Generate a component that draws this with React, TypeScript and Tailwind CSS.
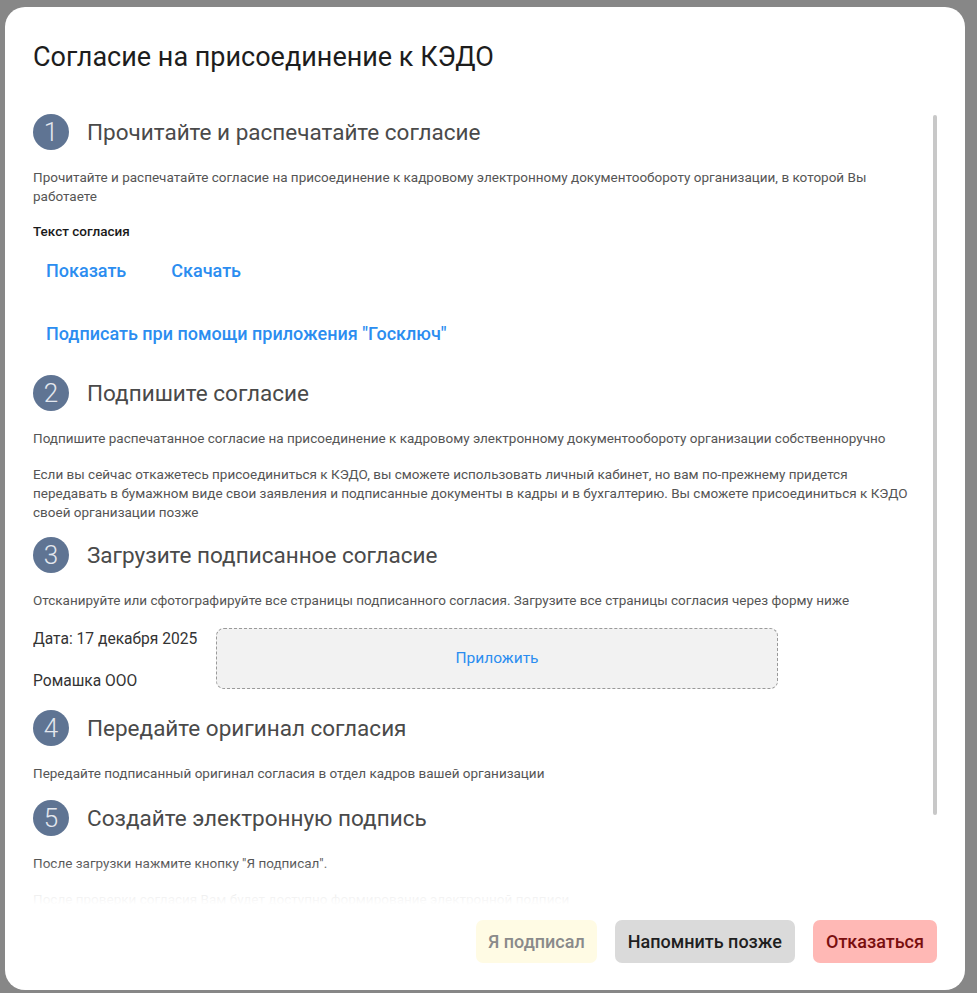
import * as React from "react";

/* Модальное окно: согласие на присоединение к КЭДО */

const STEP_HEAD = "text-[22.5px] leading-[28px] text-[#4a4a4a]";
const DESC = "text-[13.5px] leading-[19px] text-[#555]";

function StepTitle({ n, title }: { n: number; title: string }) {
  return (
    <div className="flex items-center gap-[18px]">
      <div className="flex size-[36px] shrink-0 items-center justify-center rounded-full bg-[#5f7493] text-[26px] font-light leading-none text-[#e3e7ee]">
        {n}
      </div>
      <h3 className={STEP_HEAD}>{title}</h3>
    </div>
  );
}

function LinkButton({ children }: { children: React.ReactNode }) {
  return (
    <button className="rounded-md px-[13px] py-[10px] text-[18px] font-medium leading-[20px] text-[#2b8df0]">
      {children}
    </button>
  );
}

export default function App() {
  return (
    <div className="flex h-[993px] w-full items-start justify-center bg-[#878787] pt-[7px] font-['Roboto',sans-serif]">
      <div className="ml-[-7px] flex h-[983px] w-[960px] flex-col rounded-[20px] bg-white">
        {/* header */}
        <div className="px-[28px] pt-[35px]">
          <h2 className="text-[27px] leading-[30px] text-[#1d1d1d]">
            Согласие на присоединение к КЭДО
          </h2>
        </div>

        {/* scroll body */}
        <div className="relative mt-[38px] ml-[28px] mr-[28px] h-[795px]">
          <div className="h-full overflow-hidden pr-[18px]">
            <div className="pt-[4px]">
              {/* 1 */}
              <StepTitle n={1} title="Прочитайте и распечатайте согласие" />
              <p className={`${DESC} mt-[18px]`}>
                Прочитайте и распечатайте согласие на присоединение к кадровому
                электронному документообороту организации, в которой Вы работаете
              </p>
              <p className="mt-[16px] text-[13.5px] font-medium leading-[19px] text-[#1a1a1a]">
                Текст согласия
              </p>
              <div className="mt-[10px] flex gap-[19px]">
                <LinkButton>Показать</LinkButton>
                <LinkButton>Скачать</LinkButton>
              </div>
              <div className="mt-[23px] flex">
                <LinkButton>Подписать при помощи приложения "Госключ"</LinkButton>
              </div>

              {/* 2 */}
              <div className="mt-[21px]">
                <StepTitle n={2} title="Подпишите согласие" />
              </div>
              <p className={`${DESC} mt-[18px]`}>
                Подпишите распечатанное согласие на присоединение к кадровому
                электронному документообороту организации собственноручно
              </p>
              <p className={`${DESC} mt-[17px] leading-[18.5px]`}>
                Если вы сейчас откажетесь присоединиться к КЭДО, вы сможете
                использовать личный кабинет, но вам по-прежнему придется
                передавать в бумажном виде свои заявления и подписанные документы
                в кадры и в бухгалтерию. Вы сможете присоединиться к КЭДО своей
                организации позже
              </p>

              {/* 3 */}
              <div className="mt-[15px]">
                <StepTitle n={3} title="Загрузите подписанное согласие" />
              </div>
              <p className={`${DESC} mt-[18px]`}>
                Отсканируйте или сфотографируйте все страницы подписанного
                согласия. Загрузите все страницы согласия через форму ниже
              </p>
              <div className="mt-[18px] flex gap-[18px]">
                <div className="flex w-[165px] flex-col gap-[22px] pt-[1px] text-[15.6px] leading-[20px] whitespace-nowrap text-[#333]">
                  <span>Дата: 17 декабря 2025</span>
                  <span>Ромашка ООО</span>
                </div>
                <button className="flex h-[61px] w-[562px] items-center justify-center rounded-[8px] border border-dashed border-[#9a9a9a] bg-[#f2f2f2] text-[15.5px] text-[#2b8df0]">
                  Приложить
                </button>
              </div>

              {/* 4 */}
              <div className="mt-[19px]">
                <StepTitle n={4} title="Передайте оригинал согласия" />
              </div>
              <p className={`${DESC} mt-[18px]`}>
                Передайте подписанный оригинал согласия в отдел кадров вашей
                организации
              </p>

              {/* 5 */}
              <div className="mt-[17px]">
                <StepTitle n={5} title="Создайте электронную подпись" />
              </div>
              <p className={`${DESC} mt-[18px]`}>
                После загрузки нажмите кнопку "Я подписал".
              </p>
              <p className={`${DESC} mt-[17px]`}>
                После проверки согласия Вам будет доступно формирование
                электронной подписи
              </p>
            </div>
          </div>
          {/* scrollbar thumb */}
          <div className="pointer-events-none absolute right-0 top-[5px] h-[700px] w-[4px] rounded-full bg-[#c8c8c8]" />
          {/* fade at the bottom of the scroll area */}
          <div className="pointer-events-none absolute bottom-0 left-0 right-[8px] h-[42px] bg-gradient-to-b from-white/0 via-white/80 to-white" />
        </div>

        {/* footer */}
        <div className="mt-[15px] flex justify-end gap-[18px] px-[28px]">
          <button className="h-[43px] rounded-[7px] bg-[#fffbe4] px-[12px] text-[18px] font-medium text-[#8a8a8a]">
            Я подписал
          </button>
          <button className="h-[43px] rounded-[7px] bg-[#dadada] px-[13px] text-[18px] font-medium text-[#1f1f1f]">
            Напомнить позже
          </button>
          <button className="h-[43px] rounded-[7px] bg-[#ffb8b5] px-[13px] text-[18px] font-medium text-[#7a0f0f]">
            Отказаться
          </button>
        </div>
      </div>
    </div>
  );
}
